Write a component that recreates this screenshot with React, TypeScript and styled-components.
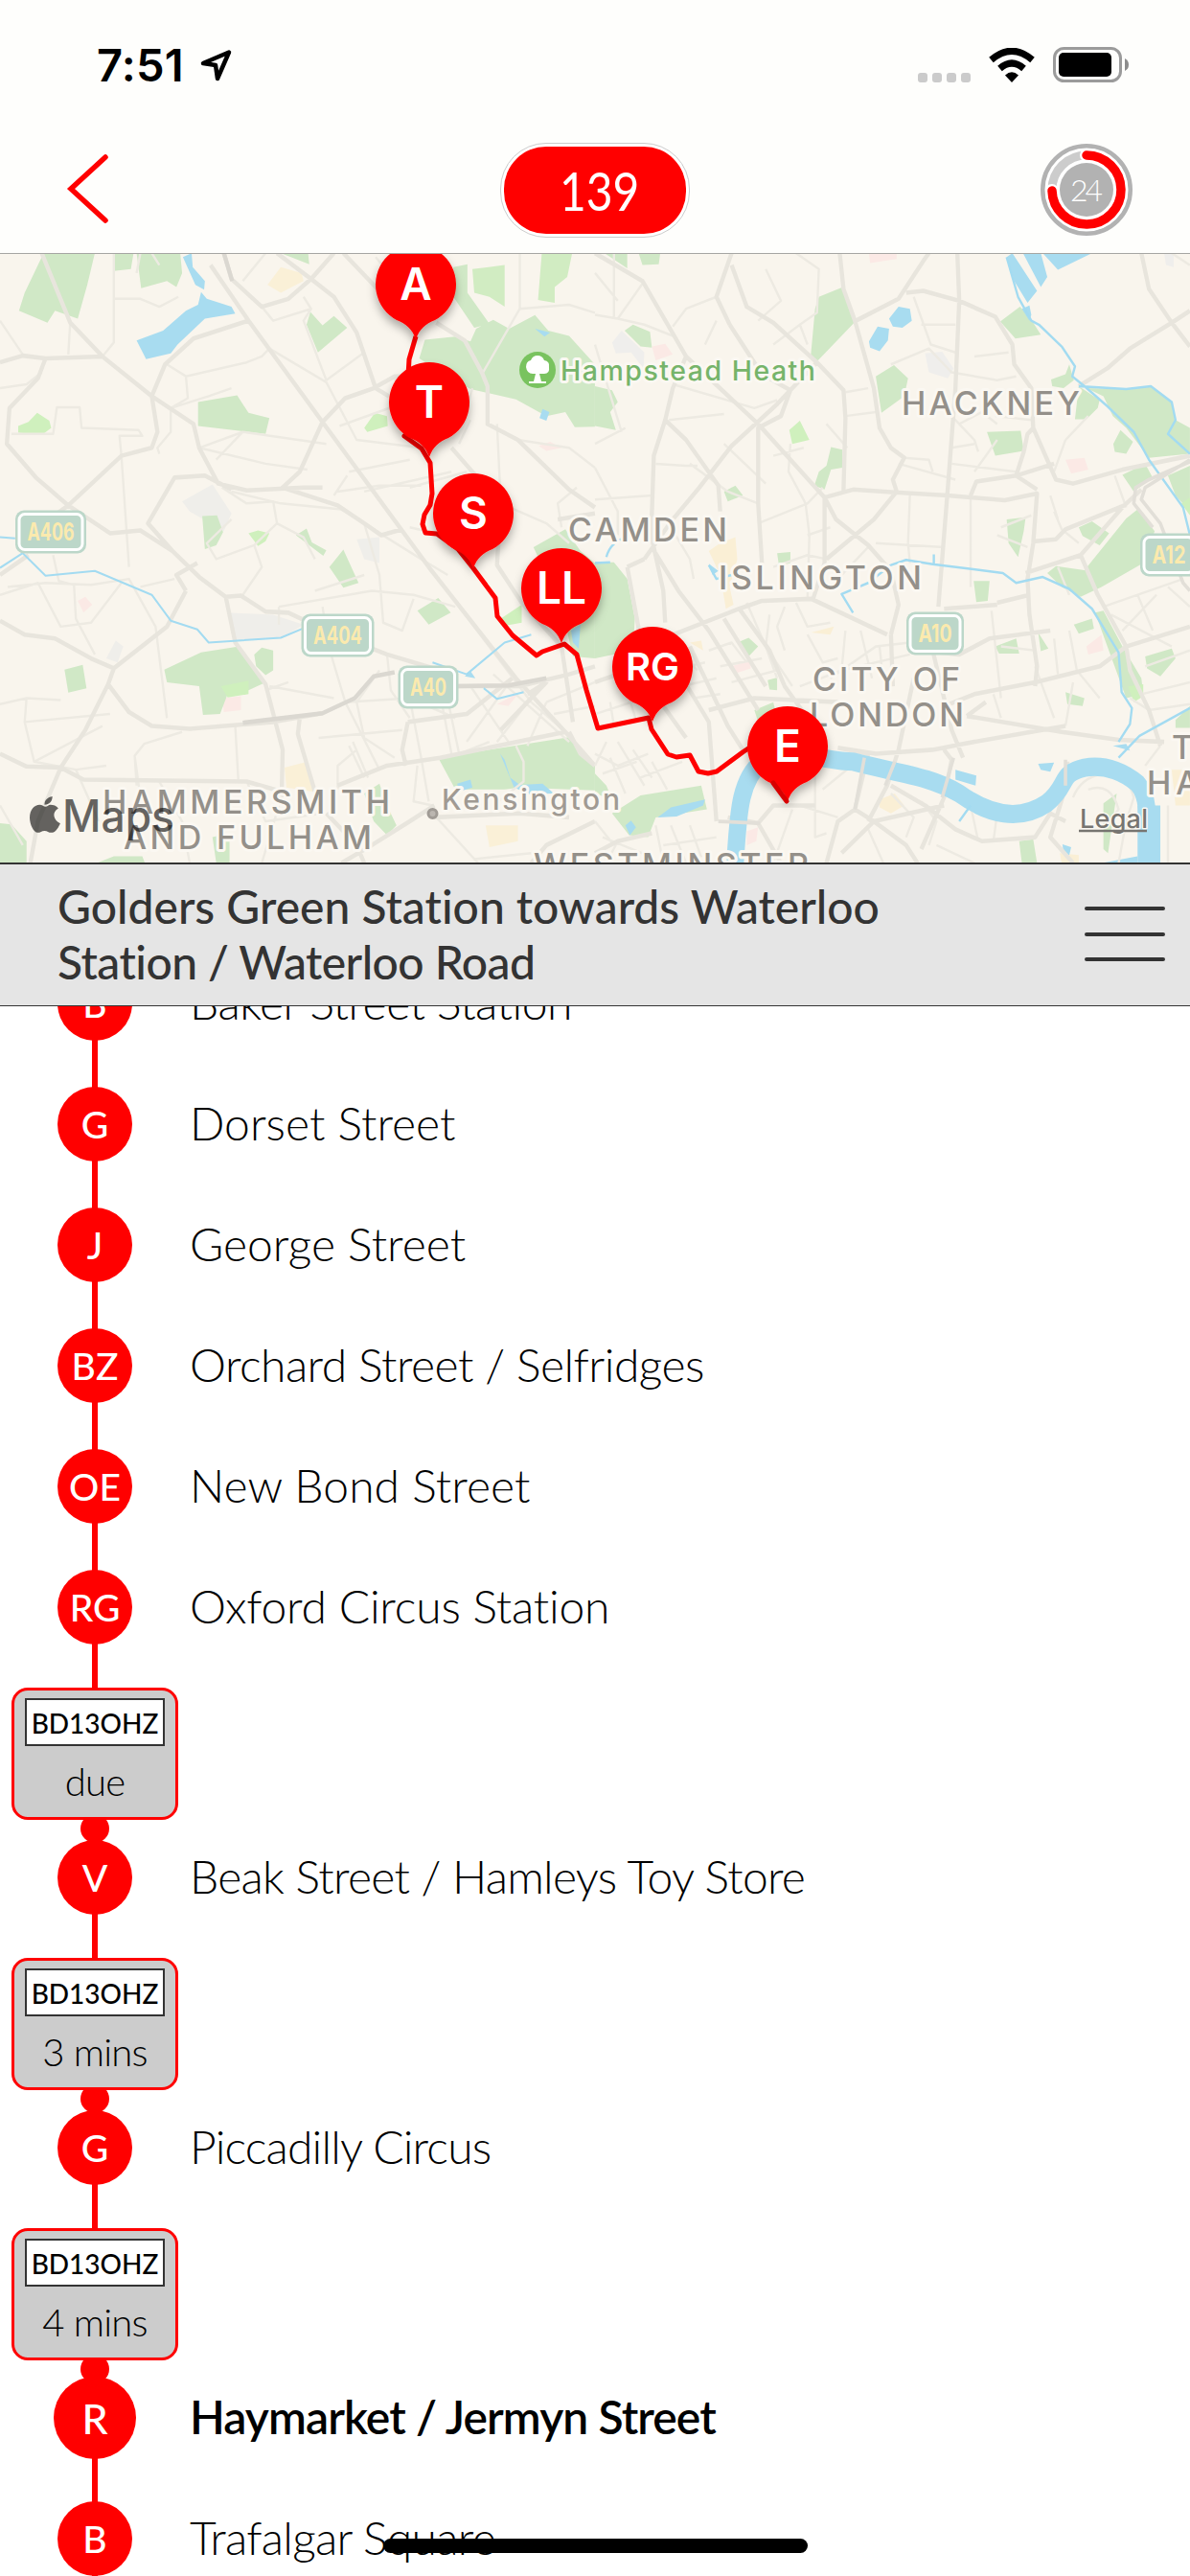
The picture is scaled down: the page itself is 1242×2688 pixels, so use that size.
import React from 'react';
import styled, { createGlobalStyle } from 'styled-components';

const RED = '#ff0000';
const HUMANIST = "'Lato', 'Liberation Sans', sans-serif";
const SYSTEM = "'Inter', 'Liberation Sans', sans-serif";

const GlobalStyle = createGlobalStyle`
  * { box-sizing: border-box; }
  html, body { margin: 0; padding: 0; background: #fff; }
`;

const Screen = styled.div`
  position: relative;
  display: flex;
  flex-direction: column;
  width: 1242px;
  height: 2688px;
  overflow: hidden;
  background: #fff;
  font-family: ${HUMANIST};
  font-variant-ligatures: none;
  color: #000;
`;

/* ---------- header ---------- */

const Header = styled.header`
  flex: none;
  height: 265px;
  display: flex;
  flex-direction: column;
  background: #fefefc;
  border-bottom: 1px solid #a6a6a3;
`;

const StatusBar = styled.div`
  height: 132px;
  padding: 3px 64px 0 101px;
  display: flex;
  align-items: center;
  justify-content: space-between;
`;

const Clock = styled.div`
  display: flex;
  align-items: center;
  gap: 17px;
  font: 600 47px/56px ${SYSTEM};
  letter-spacing: .2px;
`;

const StatusIcons = styled.div`
  display: flex;
  align-items: center;
  gap: 19px;
`;

const SignalDots = styled.div`
  display: flex;
  gap: 5px;
  padding-top: 26px;
`;

const SignalDot = styled.i`
  width: 10px;
  height: 10px;
  border-radius: 3px;
  background: #cbcbcb;
`;

const NavBar = styled.div`
  height: 132px;
  padding: 0 60px;
  display: grid;
  grid-template-columns: 1fr auto 1fr;
  align-items: center;
`;

const RoutePill = styled.div`
  width: 198px;
  height: 99px;
  padding: 3px;
  border: 1.5px solid #ccc;
  border-radius: 48px;
  background: #fff;
`;

const RouteNumber = styled.div`
  height: 100%;
  padding-left: 10px;
  border-radius: 44px;
  background: ${RED};
  color: #fff;
  font-size: 57px;
  line-height: 90px;
  text-align: center;
`;

const Squeeze = styled.span<{ $x: number }>`
  display: inline-block;
  transform: scaleX(${(p) => p.$x});
`;

const BackButton = styled.button`
  justify-self: start;
  display: flex;
  padding: 0;
  margin-left: 9px;
  border: 0;
  background: none;
`;

const Countdown = styled.div`
  justify-self: end;
  display: flex;
`;

/* ---------- map ---------- */

const MapPanel = styled.section`
  flex: none;
  height: 635px;
  background: #f9f5ed;
  svg { display: block; }
`;

/* ---------- title ---------- */

const TitleBar = styled.section`
  flex: none;
  height: 150px;
  padding: 0 26px 0 60px;
  display: flex;
  align-items: center;
  justify-content: space-between;
  background: #e5e5e5;
  border-top: 2px solid #333;
  border-bottom: 1px solid #333;
  position: relative;
  z-index: 3;
`;

const Title = styled.h1`
  margin: 0 0 2px;
  font-size: 48px;
  font-weight: 500;
  line-height: 58px;
  color: #333;
  white-space: nowrap;
`;

const TitleLine = styled.span<{ $spacing: number }>`
  display: block;
  letter-spacing: ${(p) => p.$spacing}px;
`;

const MenuButton = styled.button`
  display: flex;
  flex-direction: column;
  gap: 22.5px;
  padding: 0;
  margin-bottom: 2px;
  border: 0;
  background: none;
`;

const MenuLine = styled.span`
  width: 84px;
  height: 4px;
  border-radius: 2px;
  background: #333;
`;

/* ---------- stops ---------- */

const StopList = styled.main`
  flex: 1;
  overflow: hidden;
`;

const Scrolled = styled.div`
  margin-top: -66px;
`;

const Row = styled.div`
  height: 126px;
  display: flex;
  align-items: center;
`;

const Rail = styled.div`
  flex: none;
  width: 198px;
  height: 100%;
  display: flex;
  flex-direction: column;
  align-items: center;
  justify-content: center;
  background: linear-gradient(${RED}, ${RED}) 96px 0 / 6px 100% no-repeat;
`;

const StopDot = styled.div<{ $current?: boolean }>`
  width: ${(p) => (p.$current ? 86 : 78)}px;
  height: ${(p) => (p.$current ? 86 : 78)}px;
  border-radius: 50%;
  background: ${RED};
  color: #fff;
  font-size: ${(p) => (p.$current ? 43 : 39)}px;
  font-weight: 500;
  line-height: ${(p) => (p.$current ? 87 : 79)}px;
  text-align: center;
`;

const StopName = styled.div<{ $current?: boolean; $spacing: number }>`
  font-size: 48px;
  line-height: 60px;
  padding-bottom: 2px;
  font-weight: ${(p) => (p.$current ? 600 : 300)};
  letter-spacing: ${(p) => p.$spacing}px;
  white-space: nowrap;
`;

const BusRow = styled.div`
  height: 156px;
  display: flex;
`;

const BusRail = styled(Rail)`
  justify-content: flex-start;
  padding-top: 21px;
`;

const BusCard = styled.div`
  position: relative;
  z-index: 1;
  flex: none;
  width: 174px;
  height: 138px;
  padding: 8px 11px 0;
  border: 3px solid ${RED};
  border-radius: 17px;
  background: #ccc;
`;

const Plate = styled.div`
  height: 50px;
  border: 2px solid #333;
  background: #fff;
  font-size: 28px;
  font-weight: 500;
  line-height: 48px;
  text-align: center;
`;

const Eta = styled.div`
  margin-top: 12px;
  font-size: 40px;
  font-weight: 300;
  line-height: 50px;
  letter-spacing: -.8px;
  text-align: center;
  white-space: nowrap;
`;

const BusMarker = styled.div`
  flex: none;
  width: 30px;
  height: 30px;
  margin-top: -6px;
  border-radius: 50%;
  background: ${RED};
`;

const HomeIndicator = styled.div`
  position: absolute;
  left: 400px;
  bottom: 24px;
  z-index: 5;
  width: 443px;
  height: 15px;
  border-radius: 8px;
  background: #000;
`;

/* ---------- map drawing ---------- */

const WEST = 'translate(0 -5) scale(.396 .4146)';
const EAST = 'translate(621 -5) scale(.396 .4146)';

const westParks = [
  'M115 10L250 10 230 90 205 175 145 155 125 185 50 155 65 110Z',
  'M300 10H352L345 50 300 55Z', 'M360 10H475L480 60 465 95 440 80 372 98Z',
  'M740 10H812L815 38Z', 'M818 158L850 192 880 168 915 198 838 260 808 190Z',
  'M522 385L625 368 655 412 710 425 700 465 522 445Z',
  'M1195 45L1232 38V110L1290 188 1250 198 1195 120Z',
  'M1120 228L1200 220 1240 232 1255 200 1300 178 1342 200 1410 166 1445 205 1500 218 1568 290V447L1515 448 1490 410 1440 420 1360 378 1240 352 1180 320 1105 275Z',
  'M533 672L572 670 588 712 570 745 540 755Z', 'M780 720L808 703 822 738 860 758 852 772Z',
  'M868 800L905 756 945 840 905 852Z', 'M1100 910L1155 878 1188 915 1130 945Z',
  'M1406 750L1490 705 1530 760 1568 790V1030L1510 1025 1480 900Z',
  'M433 1058L530 1015 630 1000 700 1090 655 1110 600 1120 580 1170 535 1172 525 1100 440 1090Z',
  'M670 1020L690 1003 720 1010V1060L700 1072 675 1050Z', 'M170 1058L218 1046 228 1105 180 1116Z',
  'M1155 1280L1500 1228 1535 1260 1568 1300V1362L1370 1355 1330 1360 1200 1360Z',
  'M0 1445L30 1448 70 1490V1545H0Z', 'M255 1545L300 1528 375 1528 382 1545Z',
  'M560 1480L605 1470V1545H570Z', 'M960 1370L1000 1345 1020 1400 1045 1450 1020 1475 985 1440Z',
];
const westLime = ['M48 445L75 435 98 412 130 432 135 450 110 468 48 462Z', 'M960 450L988 412 1020 420 1022 445 968 460Z', 'M655 715L680 708 710 715 700 735 680 747Z', 'M582 1100L655 1086V1120L600 1128Z', 'M1320 930L1375 895V940L1330 948Z'];
const westMeadow = ['M1245 50L1330 40V145L1290 120 1250 110Z', 'M1428 10H1508L1495 70 1462 95V135L1418 128Z'];
const westWater = ['M482 20L505 10 508 45 540 80 538 102 515 90Z', 'M360 230L430 205 490 155 522 140 530 108 545 125 610 145 620 162 540 175 468 240 450 262 385 277Z', 'M1505 960L1530 945 1525 1005 1510 990Z', 'M1318 1270L1330 1285 1345 1330 1370 1348 1430 1345 1460 1370 1395 1372 1355 1355Z', 'M1410 200L1450 210 1435 220Z', 'M1422 425L1430 402 1448 410 1440 432Z', 'M1205 1345L1240 1335 1245 1355 1210 1365Z', 'M1225 1075L1240 1062 1253 1080Z'];
const eastParks = [
  'M25 10H85V48Z', 'M115 10H172L168 38 125 40Z', 'M590 120L652 96 688 180 588 280 568 275 580 150Z',
  'M78 205L100 190 145 208 150 248 120 245Z', 'M0 345L45 355 60 385 40 410 55 455 0 445Z',
  'M740 320L788 292 825 325 815 370 755 412Z', 'M622 498L652 505V550L622 555 605 605 578 595 590 560 610 545Z',
  'M1068 182L1120 145 1145 170 1175 215 1108 225Z', 'M1033 460L1122 457 1130 508 1055 520Z',
  'M1202 328L1240 315 1250 290 1262 330 1235 350 1205 345Z', 'M1275 345L1330 380 1325 400 1295 428 1265 428Z',
  'M1295 350L1400 352 1465 345 1520 385 1530 430 1568 450V515L1460 525 1400 450 1365 420 1340 370Z',
  'M1366 490L1385 455 1418 485 1400 515 1370 510Z', 'M1390 568L1450 540 1470 575 1420 610Z', 'M1510 570L1568 545V660L1530 620Z',
  'M1085 680L1135 675 1130 710 1115 775 1090 740Z', 'M1275 700L1310 685 1355 715 1330 745 1285 722Z',
  'M1192 815L1215 798 1290 808 1400 678 1430 655 1475 710 1445 790 1335 850 1280 875 1230 850Z',
  'M998 835H1040L1035 885 1005 888Z', 'M1262 945L1310 930 1315 955 1275 968Z', 'M1055 1000L1110 980 1118 1018 1065 1018Z',
  'M1168 965L1195 1005 1175 1012Z', 'M1450 1025L1520 1005 1530 1030 1490 1075 1455 1055Z',
  'M1318 915L1340 910 1390 1000 1440 1080 1445 1120 1400 1130Z', 'M1240 1115L1290 1130 1285 1150 1245 1145Z',
  'M0 788L50 788 85 830 105 930 100 1010 0 1030Z', 'M375 990L405 978 430 1000 400 1030Z', 'M455 1085L480 1078V1110L460 1108Z',
  'M420 1160L470 1140 480 1180 430 1190Z', 'M45 1420L120 1375 280 1350 295 1410 160 1430 140 1480 90 1475Z',
  'M0 1320L30 1350 45 1385 0 1370Z', 'M1340 1395L1375 1370 1352 1520 1340 1510Z', 'M1118 1490L1155 1485 1165 1545H1125Z',
  'M340 610L370 595 390 620 350 635Z', 'M480 765L515 762V790L485 798Z', 'M1530 1185L1568 1150V1205H1530Z',
];
const eastLime = ['M512 455L540 432 565 480 520 490Z', 'M1405 1100L1445 1095V1125L1420 1140Z', 'M1545 640L1568 625V670Z'];
const eastWater = [
  'M1085 20L1100 10 1165 105 1140 135 1105 80Z', 'M1128 10H1175L1192 70 1175 95Z', 'M1180 10H1310L1220 52Z',
  'M775 175L800 145 830 150 835 180 810 198 785 195Z', 'M722 232L745 195 775 200 772 230 750 257 725 248Z',
  'M1125 150L1145 142 1150 165 1145 180Z', 'M300 792L325 810 310 820Z', 'M165 1430L200 1405 290 1385 285 1400 215 1428Z',
  'M80 1450L95 1438 108 1455 92 1475Z', 'M950 1310L1005 1325 1003 1350 950 1335Z', 'M1168 1295L1210 1292 1200 1315 1175 1310Z',
  'M1232 1498L1255 1505 1250 1525 1235 1520Z', 'M1335 1545L1430 1528V1545Z', 'M1365 1250L1400 1245 1410 1262Z',
];

const westRoads = [
  'M110 10L185 185 270 270 400 370 510 440 525 500 575 590 650 607 800 600 850 600 M400 370L415 460 400 500 320 520 180 645 100 700',
  'M0 285L60 268 120 275 270 270 M120 275L100 325 25 400 18 490 95 575 180 645 290 715 370 708 455 760 525 825 595 875 635 872 700 912 760 915 860 960 1020 1020 1160 1060',
  'M555 40L655 180 850 435 1130 800 1360 1080 1490 1215 1568 1300', 'M590 10L610 75 690 145 760 125 820 75 880 10 M730 10L820 75 880 120 940 210 990 350 1025 370',
  'M655 180L510 225 435 290 400 370 M850 435L910 375 985 350 1040 320 1075 320',
  'M850 435L790 560 745 600 890 645 960 690 1005 720 1060 705', 'M905 10L1005 110 M1150 185L1225 230 1270 310 1285 345V440L1365 480 1500 605 1568 650',
  'M455 760L390 690 460 575 540 570 610 605', 'M0 820L75 770 M0 935L65 970 145 980 240 1030 300 1055',
  'M490 860L440 950 300 1055 285 1095 225 1210 160 1305 100 1440 80 1545', 'M490 860L465 820 520 790',
  'M285 1095L340 1165 400 1200 500 1207 720 1190 850 1168 M595 875L620 990 700 1095 745 1260 742 1385',
  'M0 1270L70 1302 160 1305 220 1335 650 1340 760 1370 M790 1180L785 1220 830 1365', 'M890 1350L1020 1300 1160 1280 1490 1215',
  'M1190 500L1245 560 1320 640 1310 795 1375 890 1480 1000 1510 1190', 'M1205 1100H1370L1500 1070 1568 1050', 'M1145 1400L1080 1440 980 1500 900 1545 M1075 1190L1060 1260 1070 1300 M1145 1430L1370 1420 1500 1430 M1568 1440L1440 1500 1400 1545',
  'M860 1420L940 1500 960 1545 M1320 1210L1440 1090 1390 1120 M1075 1190L1230 1170 1350 1080',
  'M1500 1215L1530 1270 1568 1300 M1470 680L1568 665',
];
const westMinor = [
  'M300 10V235L270 270 M300 125H370L420 145 470 120 M185 185L180 265 M0 180L60 265 M370 10L360 60 M700 10L640 80 M690 145L720 180 820 150 800 120',
  'M0 350L70 340 110 310 M30 465H140L150 398H210L215 450 365 455 375 470 315 470 320 520 340 800 M450 400L550 370 610 350 M440 290L490 320 495 375 450 400',
  'M490 320L650 285 690 270 710 250 M450 400V460L415 500 420 515 M525 500L640 460 860 490 M525 500L700 540 810 555 M640 460L570 530',
  'M710 250L860 335 940 480 1110 500 M820 150L800 180 860 330 M860 330L960 260 M1005 110L1025 60 990 20 M895 445L1040 395 M920 560L1080 530 M880 620L915 570',
  'M585 600L650 640 720 635 730 690 800 725 830 780 M730 690L670 745 570 780 545 740 610 680 M610 610L740 640 900 655 1110 780 M670 745L690 800 640 870',
  'M735 900L980 860 1090 870 1200 900 M735 900V945 M850 900L860 960 M1110 595H1000L890 610 M1040 320L1060 400 1110 500 M960 690L1000 820 1010 940 1060 960 1090 880 M830 860L960 820',
  'M400 10L420 40 M370 850L460 830 M20 850L120 840 240 845 340 830 410 950 440 1180 M140 770L155 835 195 845 200 930 250 1020 M0 870L100 840 160 950 240 940 320 840',
  'M0 1145L70 1130 160 1135 M70 1130L65 1190 90 1290 200 1310 280 1300 M65 1190L290 1170 M90 1290L270 1200 M360 1350L355 1275 380 1245 480 1215 M355 1275L370 1380',
  'M620 1200L628 1335 M860 980L910 1140 1000 1310 M910 1140L1080 1130 1200 1180 M710 1100L880 1130 M760 1090L700 1110 M1020 1020L1030 1110 1080 1180 M1000 1060L940 1140 960 1230 1040 1280',
  'M840 1230L1060 1210 M920 1250L960 1330 M930 1240L970 1330 M890 1360V1300L940 1260 M1160 1120L1190 1270 M1175 1110L1210 1270 1290 1240 M1240 1100L1340 1240 M1300 1070L1500 1240 M1210 900L1400 1140 1490 1215',
  'M1080 1130L1110 1280 1130 1390 M1100 1300L1090 1390 1140 1400 M1350 1080L1230 1240 M1400 1130L1310 1240 M1360 1250L1380 1290V1340L1300 1400 M1440 1140L1390 1250 M1568 1090L1440 1140 M1568 1150L1460 1170',
  'M1370 10V150L1500 140 1568 160 M1370 150L1270 315 M1240 430L1210 490 M1245 350L1220 440 M1365 480L1500 500 1568 550 M1310 440L1320 640 M1110 780L1180 820 M1190 560L960 610 M1080 700L1170 720',
  'M1520 600L1470 640 1480 700 M1320 640L1440 690 1500 740 M1230 560L1080 600 M0 1400L60 1500 M200 1310L260 1440 M420 1340L480 1440 500 1545 M650 1340L700 1440 850 1420 M740 1385L690 1545 M1150 1430L1260 1545 M1250 1535L1400 1520',
];
const eastRoads = [
  'M0 10L125 80 240 270 M360 10L320 120 355 190 M360 40L400 145 470 185 585 285 655 355 660 425 655 610 M240 270L205 350 185 430 155 520 148 720',
  'M645 10L655 100 685 180 735 350 750 450 780 500 815 525 785 580 795 610 735 680 610 780',
  'M688 180L800 125 865 30 880 10 M820 110L865 105 960 130 1055 170 1100 240 1105 290 1150 350 1155 450 1215 580 1260 590 1390 555 1568 520',
  'M955 10L960 130 950 350 930 600 905 900 M585 285L480 390 360 495 275 600 205 680 130 780 M355 190L440 315 515 355 M240 270L430 440 605 625 M515 355L490 420 430 450V640L440 790',
  'M185 430L240 480 325 595 330 660 M605 625L680 605 790 612 930 620 1080 632 1165 615 1155 740 1140 830 1145 920 1165 1050 1160 1100',
  'M605 625V790L575 880 M605 625L635 680 720 745 780 810 800 895 780 970 M1110 570L1005 585 990 620 M1155 450L1140 465 1130 510 1110 570 1165 605 M1110 570L1210 540',
  'M1160 735L1215 730 1240 705 1395 645 1440 605 M1135 815L1280 770 1390 650 M1280 770L1325 870 1400 1000 1410 1060 1460 1160 1490 1250 M1060 895L920 905 M1145 870L1060 890',
  'M1440 10L1460 100 1520 185 1568 245 M1568 155L1520 185 1410 250 1350 300 1275 345', 'M100 1010L380 905 440 885 570 880 770 970 M380 905L460 1010 500 1100 560 1180',
  'M0 1090L90 1060 M860 1010L960 1020 1040 980 1200 960 M920 1150L1000 1120 1160 1090 1330 1050 1400 1000 1568 950',
  'M300 1160L420 1130 640 1140 M640 1255L740 1270 890 1260 970 1245 1240 1200 M920 1260L940 1285 920 1380 860 1510 M980 1175L1230 1215 1380 1235 1500 1240 M980 1175L1030 1140',
  'M640 1255L720 1270 685 1410 735 1440 920 1400 M800 1260L770 1350 720 1440 M685 1410L640 1440 610 1545 M735 1440L820 1500 850 1545 M735 1440L650 1520 M780 1350L870 1400 950 1460 1020 1490 1160 1480 1200 1420 1240 1440',
  'M300 960L430 1160 M340 930L450 1100 M250 1000L350 1200 390 1260 M180 1000L300 1190 320 1440 M100 980L150 1110 240 1230 M85 800L120 980 M148 720L180 860 185 940',
  'M130 780L85 800 M150 750L220 860 300 960 M780 970L785 1100 M840 1080L800 1260 M890 1010L940 1210 970 1280 M350 1430L430 1445 470 1400 580 1400 M430 1445L490 1545',
  'M1245 1290V1340L1200 1480 1260 1545', 'M0 1520L60 1490 150 1470',
];
const eastMinor = [
  'M50 10V170 M60 175L130 190 210 220 M0 60L60 130 M130 80L60 175 0 165 M320 120L240 150 205 195 M450 50L490 130 430 180 M530 10L590 50 585 160 540 190 560 240 M320 180L290 240',
  'M205 340L420 400 480 380 M195 430L340 415 M160 540L240 545 270 545 M340 490L450 590 M540 190L470 240 M0 240L70 460 M0 490L80 450 M250 540L350 610 M430 690L560 640 600 600 M515 490L510 560 555 640 565 720 560 880',
  'M660 360L720 350 M660 420L740 410 M665 500L610 440 M815 525L880 530 890 560 M800 540L950 580 M840 120L885 240 950 260 M860 190H950 M780 290L880 250 940 310 1060 330 1110 320',
  'M940 420L1000 480 1010 510 M940 500L1000 490 M940 540L1110 560 M960 440L1020 410 1060 440 M1055 420L1150 430 M830 620L825 740 M740 740L920 750 M720 750L630 840 M825 740L830 790',
  'M0 550L60 660V720 M0 630L150 620 M470 800L560 770 610 780 M200 700L250 780 260 830 M990 620V850 M1070 700L1150 670 M1060 720L1140 750 M1210 660L1230 705 1275 740 M1200 620L1220 680',
  'M1240 480L1210 560 M1300 420L1240 480 M1370 570L1400 650 M1220 800L1250 870 M1340 900L1550 830 M1360 920L1520 1000 M1430 870L1470 960 M1510 850L1568 900 M1480 870L1390 960',
  'M1045 910L1070 1130 M1070 1000L1160 1010 M1210 980L1220 1070 M1250 960L1270 1060 M1160 1050L1210 1180 M1050 1120L1070 1180 M1270 1060L1330 1130 M1260 1090L1240 1200 M1450 1050L1568 1010 M1440 1120L1568 1090',
  'M460 920L450 1000 480 1080 M500 900L480 950 500 1010 M530 890L560 950 620 940 M560 970L600 1040 640 1030 M660 960L650 1060 M700 960L730 1080 M620 1080L740 1000 830 990 M540 1100L650 1060 830 1020 M750 1000L760 1090',
  'M300 1010L360 990 400 1040 M330 1050L440 1030 M360 1090L480 1060 M220 1010L270 1060 M200 1060L290 1040 M230 1100L320 1080 M190 990L150 1050 M260 1130L330 1120 M400 890L450 1000 520 1100',
  'M0 1170L130 1130 M40 1140L50 1200 M90 1130L110 1190 M0 1270L60 1300 140 1270 M60 1240L130 1350 M120 1330L230 1290 M40 1280L80 1370 M150 1290L190 1360 M20 1320L110 1290 M100 1260L150 1330 M30 1240L0 1300',
  'M580 1290V1480L610 1470 M540 1400L640 1430 M520 1410L470 1545 M690 1290L600 1360 M780 1370L840 1430 820 1480 M860 1390L900 1440 880 1500 M990 1400L1010 1490 M1060 1420L1050 1490 M720 1460L760 1545 M900 1500L1000 1545',
  'M1410 1130L1460 1160 1568 1145 M1490 1250L1450 1300 M1260 1380Q1280 1330 1340 1320T1420 1380L1400 1440 1380 1545 M1300 1360Q1360 1340 1380 1410L1350 1450 M1510 1400V1545 M0 1440L50 1500 M20 1480L150 1530 M160 1450L180 1545 M60 1490L30 1545 M200 1450L240 1545 M250 1450L280 1530 M180 1500L320 1480',
  'M1060 480L1000 560 M1568 40L1520 10 M1000 270L1090 260 M620 700L560 720 M430 640L350 610 M470 520L550 500',
];

function HalfMap({ parks, lime, water, minor, roads }: { parks: string[]; lime: string[]; water: string[]; minor: string[]; roads: string[] }) {
  return (
    <>
      <path d={parks.join('')} fill="#d0e8c6" />
      <path d={lime.join('')} fill="#cff0bd" />
      <path d={water.join('')} fill="#a8dcf0" />
      <path d={minor.join('')} stroke="#edeae2" strokeWidth="6" fill="none" />
      <path d={roads.join('')} stroke="#e8e5dd" strokeWidth="11" fill="none" />
    </>
  );
}

const shields = [
  { x: 53, y: 290, w: 72, t: 'A406' },
  { x: 352.5, y: 398, w: 74, t: 'A404' },
  { x: 447, y: 452, w: 61, t: 'A40' },
  { x: 976, y: 396, w: 58, t: 'A10' },
  { x: 1220, y: 314, w: 58, t: 'A12' },
];

const places = [
  { x: 941, y: 168, w: 186, t: 'HACKNEY' },
  { x: 593, y: 300, w: 166, t: 'CAMDEN' },
  { x: 750, y: 350, w: 212, t: 'ISLINGTON' },
  { x: 848, y: 456, w: 154, t: 'CITY OF' },
  { x: 845, y: 493, w: 161, t: 'LONDON' },
  { x: 107, y: 584, w: 300, t: 'HAMMERSMITH' },
  { x: 129, y: 621, w: 259, t: 'AND FULHAM' },
  { x: 557, y: 650, w: 287, t: 'WESTMINSTER' },
  { x: 1223, y: 527, w: 90, t: 'TOW' },
  { x: 1197, y: 564, w: 140, t: 'HAMLE' },
];

const pins = [
  { x: 434, y: 32, t: 'A' },
  { x: 448, y: 155, t: 'T' },
  { x: 494, y: 271, t: 'S' },
  { x: 586, y: 349, t: 'LL' },
  { x: 681, y: 431, t: 'RG' },
  { x: 822, y: 514, t: 'E' },
];

function RouteMap() {
  return (
    <svg width="1242" height="635" viewBox="0 0 1242 635" strokeLinejoin="round">
      <defs>
        <filter id="pinShadow" x="-30%" y="-30%" width="160%" height="170%">
          <feDropShadow dx="0" dy="6" stdDeviation="5" floodOpacity=".3" />
        </filter>
      </defs>
      <g transform={WEST}>
        <path d="M480 635L560 592 610 665 590 710 500 660ZM600 915L720 920 800 945 740 980 620 985ZM940 730L1000 725V790L960 780ZM280 1030L305 985 325 1000 310 1040Z" fill="#efeeea" />
        <path d="M705 90L740 45 795 60 800 80 740 110ZM750 1305L810 1290 825 1365 755 1355ZM1280 1450H1365V1490L1290 1505Z" fill="#faf0d7" />
        <path d="M205 885L225 875 243 895 220 915ZM585 1130L635 1125V1160L590 1165ZM1310 1145L1370 1115 1340 1150ZM1420 495L1450 485 1480 500 1440 508Z" fill="#fbe9e5" />
        <path d={westMeadow.join('')} fill="#d1ecc2" />
        <HalfMap parks={westParks} lime={westLime} water={westWater} minor={westMinor} roads={westRoads} />
        <path d="M590 10L612 80M640 1192L850 1168 935 1130 985 1075 1040 1065M1205 1100L1340 1098 1440 1080" stroke="#dbd8d1" strokeWidth="11" fill="none" />
        <path d="M0 725L40 728M0 802L60 765 120 822 250 810 400 870 450 935 520 957 550 990 740 978 810 950M1140 1040L1230 1070 1330 990 1400 970M1275 1105L1310 1132 1380 1115" stroke="#a3dbf1" strokeWidth="5" fill="none" />
      </g>
      <g transform={EAST}>
        <path d="M722 10H795V25L725 35ZM150 245L185 238 205 265 160 280ZM1240 530L1290 525 1300 555 1255 565ZM1295 1000L1335 970 1340 1010 1300 1020ZM360 1050L410 1035V1055L370 1068ZM400 1465L430 1455 425 1490 400 1500Z" fill="#fbe9e5" />
        <path d="M870 262L915 258 945 300 930 325 880 310ZM45 235L70 205 130 260 128 300 95 260 55 262ZM1500 10H1525V45L1505 40Z" fill="#efeeec" />
        <path d="M300 760L330 740 370 725 375 780 355 850 365 895 345 905 330 820ZM750 1385L790 1370 815 1400 780 1420 750 1405ZM570 965L630 950 620 970ZM250 990L280 985 285 1010ZM1520 1310H1568V1400H1530ZM1225 1520L1275 1525V1545H1230Z" fill="#faefd5" />
        <HalfMap parks={eastParks} lime={eastLime} water={eastWater} minor={eastMinor} roads={eastRoads} />
        <path d="M368 1560C378 1440 375 1340 440 1290C510 1250 610 1290 680 1290C800 1320 880 1325 960 1370C1040 1425 1120 1440 1190 1395C1250 1350 1220 1320 1290 1305C1350 1295 1400 1320 1430 1345C1465 1380 1455 1450 1455 1560" stroke="#a8dcf0" strokeWidth="46" fill="none" />
        <path d="M1430 1400H1490V1545H1430Z" fill="#a8dcf0" />
        <path d="M1085 20L1115 120 1150 180 1170 190 1230 245 1265 295 1258 320 1290 345 1350 395 1420 460 1460 530 1550 650 1568 720M1275 345L1400 352 1465 345 1520 385 1530 430 1510 465 1568 515M30 775Q40 735 90 722M0 790L40 788M300 795L320 830 360 820M780 795L820 782 890 793 1075 815 1110 840 1180 825 1250 855 1310 905 1380 1015 1388 1115 1415 1155 1410 1195 1380 1240M893 768V795M780 795L720 840 650 868 680 915M1568 1155L1435 1225 1380 1280M960 1440L990 1400" stroke="#a3dbf1" strokeWidth="6" fill="none" />
        <path d="M710 1280L685 1410M790 1290L765 1350M945 1280L915 1380M1240 1285V1350M325 1440L435 1445M1568 530L1500 570 1450 600 1440 630 1490 690 1550 840 1568 860M1568 535L1460 580 1425 600 1420 640 1470 700" stroke="#e2dfd8" strokeWidth="9" fill="none" />
      </g>

      <g fontFamily={SYSTEM} paintOrder="stroke" stroke="#fbf8f2" strokeWidth="6">
        <g fontSize="34" fontWeight="500" fill="#94908a">
          {places.map((p) => (
            <text key={p.t} x={p.x} y={p.y} textLength={p.w} strokeLinejoin="round">{p.t}</text>
          ))}
        </g>
        <text x="461" y="580" textLength="186" fontSize="30" fontWeight="500" fill="#a09a93">Kensington</text>
        <text x="585" y="132" textLength="266" fontSize="28.500" fontWeight="500" fill="#76b46a">Hampstead Heath</text>
      </g>
      <circle cx="451.500" cy="584" r="4.500" fill="#bbb6b0" stroke="#a09b95" strokeWidth="3" />

      <circle cx="561" cy="121" r="19" fill="#79c35f" />
      <path d="M559 125L557 133H552V135H570V133H565L563 125H568Q574 125 573 118Q574 112 568 111Q566 106 561 106Q556 106 554 111Q549 112 549 118Q550 125 556 125Z" fill="#fff" />

      {shields.map((s) => (
        <g key={s.t} transform={`translate(${s.x} ${s.y})`}>
          <rect x={-s.w / 2 - 1} y="-22.500" width={s.w + 2} height="45" rx="9" fill="#bcd7c9" />
          <rect x={-s.w / 2 + 3} y="-18.500" width={s.w - 6} height="37" rx="6" fill="#bcd7c9" stroke="#fff" strokeWidth="3" />
          <text y="9" textAnchor="middle" textLength={s.w - 23} lengthAdjust="spacingAndGlyphs" fontFamily={SYSTEM} fontWeight="700" fontSize="25" fill="#fbeaae">{s.t}</text>
        </g>
      ))}

      <path d="M434 86L427 110 425 145 430 183 422 190 440 203 449 218 451 250 449 262 443 272 441 282 444 291 456 292 478 308 494 328 517 359 519 378 535 398 560 419 566 415 589 407 602 418 612 455 624 495 677 484 680 496 697 522 706 525 720 523 729 540 739 542 748 540 775 520 790 510" stroke={RED} strokeWidth="5" fill="none" />

      {pins.map((p) => (
        <g key={p.t} transform={`translate(${p.x} ${p.y})`}>
          <path d="M0 57C-4 46 -10 41 -20 37A42 42 0 1 1 20 37C10 41 4 46 0 57Z" fill={RED} filter="url(#pinShadow)" />
          <text y={p.t === 'RG' ? 14 : 16} textAnchor="middle" fontFamily={SYSTEM} fontWeight="600" fontSize={p.t === 'RG' ? 40 : 46} fill="#fff">{p.t}</text>
        </g>
      ))}
      <path d="M807 552L821 571" stroke="#d80000" strokeWidth="5" strokeLinecap="round" />

      <g fill="#000" fillOpacity=".6">
        <path transform="translate(31 566) scale(1.03 .97)" d="M21 9C24 9 27 10 29 13C22 17 24 26 31 29C28 36 25 39 22 39C19 39 18 37 15 37C12 37 11 39 8 39C4 39 0 30 0 23C0 14 5 9 10 9C13 9 14 11 16 11C18 11 19 9 21 9ZM15 9C15 4 18 1 23 0C23 5 20 9 15 9Z" />
        <text x="65" y="603" textLength="117" lengthAdjust="spacingAndGlyphs" fontFamily={SYSTEM} fontWeight="500" fontSize="46">Maps</text>
      </g>
      <text x="1127" y="599" textLength="71" fontFamily={SYSTEM} fontWeight="500" fontSize="27" fill="#777571" stroke="#fbf8f2" strokeWidth="3" paintOrder="stroke">Legal</text>
      <path d="M1126 602H1197" stroke="#777571" strokeWidth="2.500" />
    </svg>
  );
}

/* ---------- data ---------- */

type Item =
  | { kind: 'stop'; code: string; name: string; spacing: number; current?: boolean }
  | { kind: 'bus'; plate: string; eta: string };

const items: Item[] = [
  { kind: 'stop', code: 'B', name: 'Baker Street Station', spacing: -0.5 },
  { kind: 'stop', code: 'G', name: 'Dorset Street', spacing: 0 },
  { kind: 'stop', code: 'J', name: 'George Street', spacing: 0 },
  { kind: 'stop', code: 'BZ', name: 'Orchard Street / Selfridges', spacing: -0.55 },
  { kind: 'stop', code: 'OE', name: 'New Bond Street', spacing: 0.05 },
  { kind: 'stop', code: 'RG', name: 'Oxford Circus Station', spacing: -0.2 },
  { kind: 'bus', plate: 'BD13OHZ', eta: 'due' },
  { kind: 'stop', code: 'V', name: 'Beak Street / Hamleys Toy Store', spacing: -0.72 },
  { kind: 'bus', plate: 'BD13OHZ', eta: '3 mins' },
  { kind: 'stop', code: 'G', name: 'Piccadilly Circus', spacing: -0.85 },
  { kind: 'bus', plate: 'BD13OHZ', eta: '4 mins' },
  { kind: 'stop', code: 'R', name: 'Haymarket / Jermyn Street', spacing: -0.9, current: true },
  { kind: 'stop', code: 'B', name: 'Trafalgar Square', spacing: -0.7 },
];

export default function App() {
  return (
    <Screen>
      <GlobalStyle />
      <Header>
        <StatusBar>
          <Clock>
            7:51
            <svg width="33" height="34" viewBox="0 0 33 34">
              <path d="M30 3.500L3 15L16 17L18 31Z" fill="none" stroke="#000" strokeWidth="4.500" strokeLinejoin="round" />
            </svg>
          </Clock>
          <StatusIcons>
            <SignalDots><SignalDot /><SignalDot /><SignalDot /><SignalDot /></SignalDots>
            <svg width="48" height="36" viewBox="0 0 48 36">
              <path d="M24 36L17 28.500Q24 22 31 28.500Z" />
              <path d="M11.500 21.500Q24 10.500 36.500 21.500" fill="none" stroke="#000" strokeWidth="7" />
              <path d="M2.500 12.500Q24 -6 45.500 12.500" fill="none" stroke="#000" strokeWidth="7" />
            </svg>
            <svg width="79" height="37" viewBox="0 0 79 37">
              <rect x="1.500" y="1.500" width="69" height="34" rx="10" fill="none" stroke="#9b9b9b" strokeWidth="3" />
              <rect x="6" y="6" width="55" height="25" rx="5" />
              <path d="M75 12Q79 14 79 18.500T75 25Z" fill="#8c8c8c" />
            </svg>
          </StatusIcons>
        </StatusBar>
        <NavBar>
          <BackButton aria-label="Back">
            <svg width="44" height="74" viewBox="0 0 44 74">
              <path d="M41 3L5 36 41 69" fill="none" stroke={RED} strokeWidth="5.500" strokeLinecap="round" />
            </svg>
          </BackButton>
          <RoutePill><RouteNumber><Squeeze $x={0.84}>139</Squeeze></RouteNumber></RoutePill>
          <Countdown>
            <svg width="96" height="96" viewBox="0 0 96 96">
              <circle cx="48" cy="48" r="45.750" fill="#fff" stroke="#b2b2b2" strokeWidth="4.500" />
              <circle cx="48" cy="48" r="36" fill="none" stroke="#ccc" strokeWidth="9" />
              <path d="M48 12A36 36 0 1 1 12 49" fill="none" stroke="#fff" strokeWidth="14" strokeLinecap="round" />
              <path d="M48 12A36 36 0 1 1 12 49" fill="none" stroke={RED} strokeWidth="9.500" strokeLinecap="round" />
              <circle cx="48" cy="48" r="28" fill="#b2b2b2" />
              <text x="48" y="60" textAnchor="middle" fontFamily={HUMANIST} fontWeight="300" fontSize="32" textLength="34" fill="#fff">24</text>
            </svg>
          </Countdown>
        </NavBar>
      </Header>

      <MapPanel><RouteMap /></MapPanel>

      <TitleBar>
        <Title>
          <TitleLine $spacing={0}>Golders Green Station towards Waterloo</TitleLine>
          <TitleLine $spacing={-0.55}>Station / Waterloo Road</TitleLine>
        </Title>
        <MenuButton aria-label="Menu"><MenuLine /><MenuLine /><MenuLine /></MenuButton>
      </TitleBar>

      <StopList>
        <Scrolled>
          {items.map((item, i) =>
            item.kind === 'stop' ? (
              <Row key={i}>
                <Rail><StopDot $current={item.current}>{item.code}</StopDot></Rail>
                <StopName $current={item.current} $spacing={item.spacing}>{item.name}</StopName>
              </Row>
            ) : (
              <BusRow key={i}>
                <BusRail>
                  <BusCard>
                    <Plate>{item.plate}</Plate>
                    <Eta>{item.eta}</Eta>
                  </BusCard>
                  <BusMarker />
                </BusRail>
              </BusRow>
            ),
          )}
        </Scrolled>
      </StopList>
      <HomeIndicator />
    </Screen>
  );
}
